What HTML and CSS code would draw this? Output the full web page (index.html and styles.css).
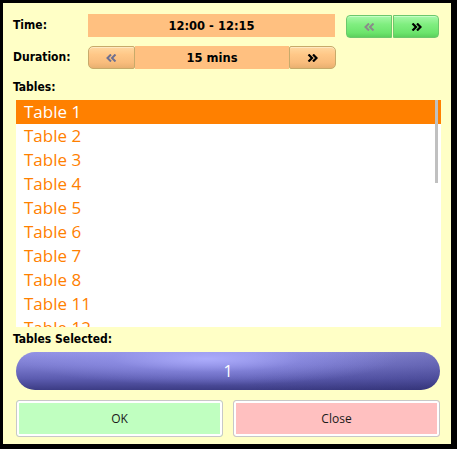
FILE: index.html
```html
<!DOCTYPE html>
<html>
<head>
<meta charset="utf-8">
<link rel="stylesheet" href="styles.css">
</head>
<body>
<div class="window">
  <div class="row row-time">
    <div class="label">Time:</div>
    <div class="field field-time">12:00 - 12:15</div>
    <div class="green-group">
      <div class="gbtn gbtn-left"><svg class="chev" width="11" height="8" viewBox="0 0 11 8"><path d="M5 0.5 L1.5 4 L5 7.5 M9.5 0.5 L6 4 L9.5 7.5" fill="none" stroke="#8a8a8a" stroke-width="2"/></svg></div>
      <div class="gbtn gbtn-right"><svg class="chev" width="11" height="8" viewBox="0 0 11 8"><path d="M1.5 0.5 L5 4 L1.5 7.5 M6 0.5 L9.5 4 L6 7.5" fill="none" stroke="#000" stroke-width="2.2"/></svg></div>
    </div>
  </div>
  <div class="row row-duration">
    <div class="label">Duration:</div>
    <div class="obtn obtn-left"><svg class="chev" width="11" height="8" viewBox="0 0 11 8"><path d="M5 0.5 L1.5 4 L5 7.5 M9.5 0.5 L6 4 L9.5 7.5" fill="none" stroke="#6e7090" stroke-width="2"/></svg></div>
    <div class="field field-duration">15 mins</div>
    <div class="obtn obtn-right"><svg class="chev" width="11" height="8" viewBox="0 0 11 8"><path d="M1.5 0.5 L5 4 L1.5 7.5 M6 0.5 L9.5 4 L6 7.5" fill="none" stroke="#000" stroke-width="2.2"/></svg></div>
  </div>
  <div class="label label-tables">Tables:</div>
  <div class="list">
    <div class="item selected">Table 1</div>
    <div class="item">Table 2</div>
    <div class="item">Table 3</div>
    <div class="item">Table 4</div>
    <div class="item">Table 5</div>
    <div class="item">Table 6</div>
    <div class="item">Table 7</div>
    <div class="item">Table 8</div>
    <div class="item">Table 11</div>
    <div class="item">Table 12</div>
    <div class="scrollbar"></div>
  </div>
  <div class="label label-selected">Tables Selected:</div>
  <div class="pill">1</div>
  <div class="actions">
    <div class="abtn ok">OK</div>
    <div class="abtn close">Close</div>
  </div>
</div>
</body>
</html>
```
FILE: styles.css
```css
html, body {
  margin: 0;
  padding: 0;
  background: #000;
  width: 457px;
  height: 449px;
  overflow: hidden;
}
.window {
  margin: 3px 0 0 3px;
  width: 448px;
  height: 441px;
  background: #ffffc6;
  padding-top: 11px;
  box-sizing: border-box;
  font-family: "DejaVu Sans", sans-serif;
}
.label {
  font-family: "DejaVu Sans Condensed", "DejaVu Sans", sans-serif;
  font-stretch: condensed;
  font-weight: bold;
  font-size: 12px;
  color: #000;
}
.row {
  display: flex;
  align-items: center;
  height: 23px;
  padding-left: 10px;
}
.row .label {
  width: 75px;
  margin-top: -2px;
}
.field {
  height: 23px;
  background: #ffc080;
  font-weight: bold;
  font-size: 11.5px;
  display: flex;
  align-items: center;
  justify-content: center;
  color: #000;
}
.field-time {
  width: 247px;
}
.green-group {
  display: flex;
  gap: 1px;
  margin-left: 11px;
  margin-top: 2px;
}
.gbtn {
  width: 44px;
  height: 21px;
  border: 1px solid #6cc86c;
  background: linear-gradient(to bottom, #a8f8a8 0%, #80ee80 40%, #6ce46c 80%, #5cd05c 100%);
  display: flex;
  align-items: center;
  justify-content: center;
  box-shadow: inset 0 1px 0 #c4ffc4;
}
.gbtn-left {
  border-radius: 4px 0 0 4px;
}
.gbtn-right {
  border-radius: 0 4px 4px 0;
}
.row-duration {
  margin-top: 9px;
}
.obtn {
  width: 45px;
  height: 21px;
  border: 1px solid #c8aa6a;
  background: linear-gradient(to bottom, #ffd8a0 0%, #ffc888 35%, #f8bc7c 75%, #e8b070 100%);
  display: flex;
  align-items: center;
  justify-content: center;
  box-shadow: inset 0 1px 0 #ffe8c0;
}
.obtn-left {
  border-radius: 5px 2px 2px 5px;
}
.obtn-right {
  border-radius: 2px 5px 5px 2px;
}
.field-duration {
  width: 154px;
}
.label-tables {
  margin: 11px 0 0 10px;
  height: 15px;
  line-height: 15px;
  margin-bottom: 5px;
}
.list {
  position: relative;
  margin-left: 13px;
  width: 425px;
  height: 227px;
  background: #fff;
  overflow: hidden;
}
.item {
  height: 24px;
  line-height: 24px;
  padding-left: 8px;
  font-family: "Open Sans", sans-serif;
  font-size: 17px;
  color: #ff8000;
}
.item.selected {
  background: #ff8000;
  color: #fff;
}
.scrollbar {
  position: absolute;
  left: 419px;
  top: 0;
  width: 3px;
  height: 83px;
  background: #c0c0c0;
}
.label-selected {
  margin: 5px 0 0 10px;
  height: 14px;
  line-height: 14px;
}
.pill {
  margin: 6px 0 0 13px;
  width: 424px;
  height: 38px;
  border-radius: 19px;
  background:
    radial-gradient(ellipse 45% 70% at 45% 18%, rgba(176,176,255,0.9) 0%, rgba(150,150,240,0.4) 50%, rgba(120,120,220,0) 100%),
    linear-gradient(to right, rgba(0,0,0,0) 55%, rgba(30,30,90,0.25) 100%),
    linear-gradient(to bottom, #9494e4 0%, #7c7cd0 35%, #5c5cb0 70%, #3c3c84 100%);
  color: #fff;
  font-family: "Open Sans", sans-serif;
  font-size: 16px;
  display: flex;
  align-items: center;
  justify-content: center;
}
.actions {
  display: flex;
  gap: 10px;
  margin: 10px 0 0 13px;
  width: 424px;
}
.abtn {
  flex: 1;
  height: 37px;
  box-sizing: border-box;
  border: 1px solid #c8c8c8;
  border-radius: 3px;
  box-shadow: inset 0 0 0 2px #fff;
  display: flex;
  align-items: center;
  justify-content: center;
  font-family: "Open Sans", sans-serif;
  font-size: 12px;
  color: #1a1a1a;
}
.ok {
  background: #c0ffc0;
}
.close {
  background: #ffc0c0;
}
```
